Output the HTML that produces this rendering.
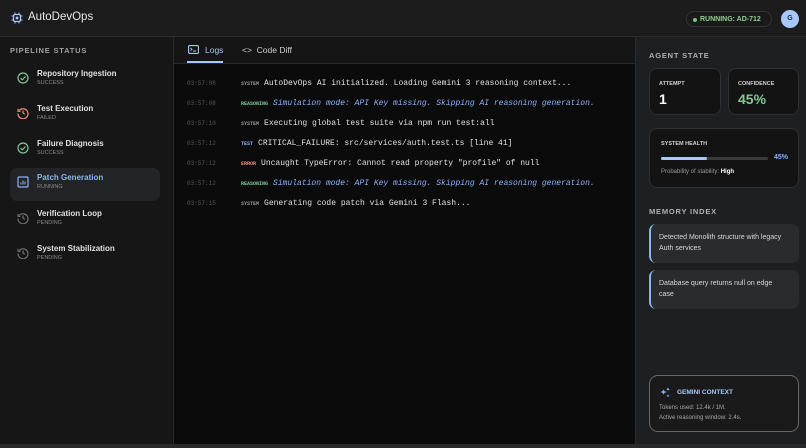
<!DOCTYPE html>
<html><head><meta charset="utf-8"><style>
*{box-sizing:border-box;margin:0;padding:0}
body{width:806px;height:448px;overflow:hidden;background:#0b0b0b;font-family:"Liberation Sans",sans-serif;color:#e3e3e3;position:relative}
.hdr{position:absolute;left:0;top:0;width:806px;height:37px;background:#1c1c1d;border-bottom:1px solid #2c2c2c}
.logo{position:absolute;left:11px;top:12px}
.title{position:absolute;left:28px;top:11px;font-size:11.5px;color:#e8e8e8}
.pill{position:absolute;left:686px;top:11px;width:86px;height:16px;border:1px solid #333;border-radius:9px;background:#1a1a1a;font-size:7px;font-weight:bold;color:#8fcf8f;padding:4px 0 0 13px}
.pill:before{content:"";position:absolute;left:6px;top:6px;width:4px;height:4px;border-radius:50%;background:#7cc47c}
.av{position:absolute;left:781px;top:10px;width:18px;height:18px;border-radius:50%;background:#a8c7fa;color:#1a2a50;font-size:7px;font-weight:bold;text-align:center;line-height:18px}
.side{position:absolute;left:0;top:37px;width:174px;height:407px;background:#161616;border-right:1px solid #2a2a2a}
.sec{font-size:7.5px;font-weight:bold;letter-spacing:.8px;color:#a0a0a0}
.item{position:absolute;left:10px;width:150px;height:32px;border-radius:7px}
.item .n{position:absolute;left:27px;top:5px;font-size:8px;font-weight:bold;color:#e0e0e0}
.item .s{position:absolute;left:27px;top:16px;font-size:5.5px;color:#8a8a8a}
.item svg{position:absolute;left:7px;top:8px}
.main{position:absolute;left:174px;top:37px;width:461px;height:407px;background:#0b0b0b}
.tabs{height:27px;background:#151515;border-bottom:1px solid #2a2a2a;position:relative}
.tab{position:absolute;top:8px;font-size:8.5px;color:#cfcfcf}
.row{position:absolute;left:13px;font-family:"Liberation Mono",monospace;font-size:8px;color:#e0e0e0;white-space:nowrap}
.row .t{color:#555;font-size:6px;display:inline-block;width:54px}
.row .k{font-size:5px;font-weight:bold;margin-right:5px}
.it{color:#8ab4f8;font-style:italic}
.right{position:absolute;left:635px;top:37px;width:171px;height:407px;background:#1e1f20;border-left:1px solid #2a2a2a}
.card{position:absolute;border:1px solid #303030;background:#131313;border-radius:8px}
.lab{font-size:5.5px;font-weight:bold;color:#d0d0d0}
.mem{position:absolute;left:13px;width:150px;background:#2a2b2d;border-radius:7px;border-left:2px solid #8ab4f8;font-size:7px;color:#d8d8d8;padding:9px 8px 9px 8px;line-height:10.5px}
.foot{position:absolute;left:0;top:444px;width:806px;height:4px;background:#2a2a2a}
</style></head><body>
<div class="hdr">
<svg class="logo" width="12" height="12" viewBox="0 0 12 12"><rect x="2.5" y="2.5" width="7" height="7" rx="1.5" fill="none" stroke="#a8c7fa" stroke-width="1.3"/><rect x="4.7" y="4.7" width="2.6" height="2.6" fill="#a8c7fa"/><path d="M4 0.5v2M8 0.5v2M4 9.5v2M8 9.5v2M0.5 4h2M0.5 8h2M9.5 4h2M9.5 8h2" stroke="#a8c7fa" stroke-width="1"/></svg>
<div class="title">AutoDevOps</div>
<div class="pill">RUNNING: AD-712</div>
<div class="av">G</div>
</div>
<div class="side">
<div class="sec" style="position:absolute;left:10px;top:9px">PIPELINE STATUS</div>
<div class="item" style="top:27px"><svg width="12" height="12" viewBox="0 0 12 12"><circle cx="6" cy="6" r="5" fill="none" stroke="#81c995" stroke-width="1.2"/><path d="M3.6 6.2l1.7 1.6 3.2-3.3" fill="none" stroke="#81c995" stroke-width="1.2"/></svg><div class="n">Repository Ingestion</div><div class="s">SUCCESS</div></div>
<div class="item" style="top:62px"><svg width="12" height="12" viewBox="0 0 12 12"><path d="M2.2 3.5A5 5 0 1 1 1 6.5" fill="none" stroke="#f28b82" stroke-width="1.2"/><path d="M1 1.8v2.5h2.5" fill="none" stroke="#f28b82" stroke-width="1.2"/><path d="M6 3.5V6l1.8 1.3" fill="none" stroke="#f28b82" stroke-width="1.2"/></svg><div class="n">Test Execution</div><div class="s">FAILED</div></div>
<div class="item" style="top:97px"><svg width="12" height="12" viewBox="0 0 12 12"><circle cx="6" cy="6" r="5" fill="none" stroke="#81c995" stroke-width="1.2"/><path d="M3.6 6.2l1.7 1.6 3.2-3.3" fill="none" stroke="#81c995" stroke-width="1.2"/></svg><div class="n">Failure Diagnosis</div><div class="s">SUCCESS</div></div>
<div class="item" style="top:131px;background:#232426;height:33px"><svg width="12" height="12" viewBox="0 0 12 12"><rect x="1" y="1" width="10" height="10" rx="1" fill="none" stroke="#8ab4f8" stroke-width="1.2"/><path d="M4 8.5v-2M6 8.5v-4M8 8.5v-3" stroke="#8ab4f8" stroke-width="1"/></svg><div class="n" style="color:#8ab4f8">Patch Generation</div><div class="s">RUNNING</div></div>
<div class="item" style="top:167px"><svg width="12" height="12" viewBox="0 0 12 12"><path d="M2.2 3.5A5 5 0 1 1 1 6.5" fill="none" stroke="#777" stroke-width="1.1"/><path d="M1 1.8v2.5h2.5" fill="none" stroke="#777" stroke-width="1.1"/><path d="M6 3.5V6l1.8 1.3" fill="none" stroke="#777" stroke-width="1.1"/></svg><div class="n">Verification Loop</div><div class="s">PENDING</div></div>
<div class="item" style="top:202px"><svg width="12" height="12" viewBox="0 0 12 12"><path d="M2.2 3.5A5 5 0 1 1 1 6.5" fill="none" stroke="#777" stroke-width="1.1"/><path d="M1 1.8v2.5h2.5" fill="none" stroke="#777" stroke-width="1.1"/><path d="M6 3.5V6l1.8 1.3" fill="none" stroke="#777" stroke-width="1.1"/></svg><div class="n">System Stabilization</div><div class="s">PENDING</div></div>
</div>
<div class="main">
<div class="tabs">
<svg style="position:absolute;left:14px;top:8px" width="11" height="9" viewBox="0 0 11 9"><rect x=".6" y=".6" width="9.8" height="7.8" rx="1" fill="none" stroke="#a8c7fa" stroke-width="1.1"/><path d="M2.5 3l1.5 1.3L2.5 5.6M5 6h3" fill="none" stroke="#a8c7fa" stroke-width=".9"/></svg>
<div class="tab" style="left:31px;color:#a8c7fa">Logs</div>
<div style="position:absolute;left:13px;top:24px;width:36px;height:2px;background:#a8c7fa"></div>
<div class="tab" style="left:68px">&lt;&gt;&nbsp; Code Diff</div>
</div>
<div class="row" style="top:42px"><span class="t">03:57:08</span><span class="k" style="color:#999">SYSTEM</span>AutoDevOps AI initialized. Loading Gemini 3 reasoning context...</div>
<div class="row" style="top:62px"><span class="t">03:57:08</span><span class="k" style="color:#81c995">REASONING</span><span class="it">Simulation mode: API Key missing. Skipping AI reasoning generation.</span></div>
<div class="row" style="top:82px"><span class="t">03:57:10</span><span class="k" style="color:#999">SYSTEM</span>Executing global test suite via npm run test:all</div>
<div class="row" style="top:102px"><span class="t">03:57:12</span><span class="k" style="color:#8ab4f8">TEST</span>CRITICAL_FAILURE: src/services/auth.test.ts [line 41]</div>
<div class="row" style="top:122px"><span class="t">03:57:12</span><span class="k" style="color:#f28b82">ERROR</span>Uncaught TypeError: Cannot read property "profile" of null</div>
<div class="row" style="top:142px"><span class="t">03:57:12</span><span class="k" style="color:#81c995">REASONING</span><span class="it">Simulation mode: API Key missing. Skipping AI reasoning generation.</span></div>
<div class="row" style="top:162px"><span class="t">03:57:15</span><span class="k" style="color:#999">SYSTEM</span>Generating code patch via Gemini 3 Flash...</div>
</div>
<div class="right">
<div class="sec" style="position:absolute;left:13px;top:14px;color:#b0b0b0">AGENT STATE</div>
<div class="card" style="left:13px;top:31px;width:72px;height:47px"><div class="lab" style="position:absolute;left:9px;top:12px">ATTEMPT</div><div style="position:absolute;left:9px;top:22px;font-size:14px;font-weight:bold;color:#fff">1</div></div>
<div class="card" style="left:92px;top:31px;width:71px;height:47px"><div class="lab" style="position:absolute;left:9px;top:12px">CONFIDENCE</div><div style="position:absolute;left:9px;top:22px;font-size:14px;font-weight:bold;color:#81c995">45%</div></div>
<div class="card" style="left:13px;top:91px;width:150px;height:60px"><div class="lab" style="position:absolute;left:11px;top:12px">SYSTEM HEALTH</div>
<div style="position:absolute;left:11px;top:28px;width:107px;height:3px;border-radius:2px;background:#3a3a3a"><div style="width:46px;height:3px;border-radius:2px;background:#a8c7fa"></div></div>
<div style="position:absolute;left:124px;top:25px;font-size:7px;font-weight:bold;color:#8ab4f8">45%</div>
<div style="position:absolute;left:11px;top:40px;font-size:6px;color:#9a9a9a">Probability of stability: <b style="color:#fff">High</b></div></div>
<div class="sec" style="position:absolute;left:13px;top:170px;color:#b0b0b0">MEMORY INDEX</div>
<div class="mem" style="top:187px;height:39px">Detected Monolith structure with legacy Auth services</div>
<div class="mem" style="top:233px;height:39px;padding-right:20px">Database query returns null on edge case</div>
<div style="position:absolute;left:13px;top:338px;width:150px;height:57px;border:1px solid #666;border-radius:9px;background:#1a1a1b">
<svg style="position:absolute;left:9px;top:10px" width="12" height="12" viewBox="0 0 12 12"><path d="M4.5 3.5L5.8 6 4.5 8.5 3.2 6z M1.5 6l3-1.2 3 1.2-3 1.2z" fill="#8ab4f8"/><path d="M9 1.5l.6 1.1 1.1.6-1.1.6L9 4.9l-.6-1.1-1.1-.6 1.1-.6zM9 8.5l.5.9.9.5-.9.5-.5.9-.5-.9-.9-.5.9-.5z" fill="#8ab4f8"/></svg>
<div style="position:absolute;left:27px;top:13px;font-size:6.5px;font-weight:bold;color:#a8c7fa">GEMINI CONTEXT</div>
<div style="position:absolute;left:9px;top:29px;font-size:6px;color:#a8a8a8">Tokens used: 12.4k / 1M.</div>
<div style="position:absolute;left:9px;top:39px;font-size:6px;color:#a8a8a8">Active reasoning window: 2.4s.</div>
</div>
</div>
<div class="foot"></div>
</body></html>
